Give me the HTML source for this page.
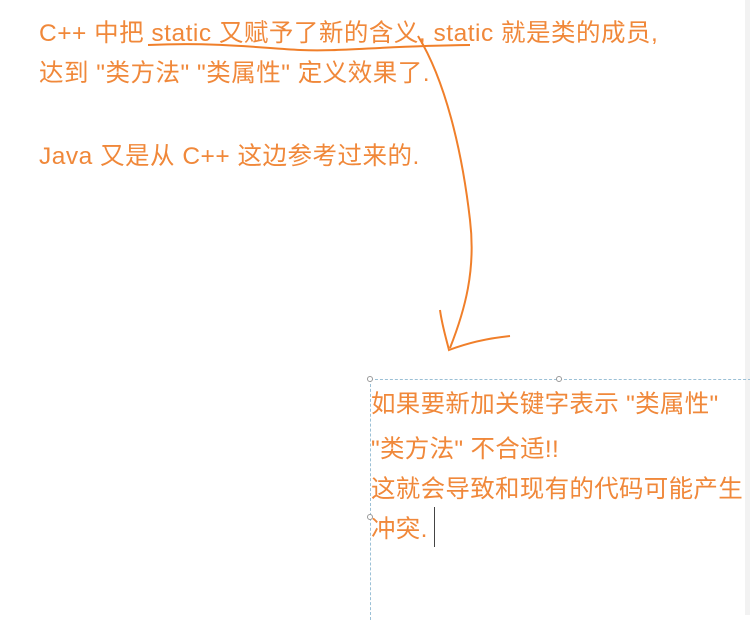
<!DOCTYPE html>
<html><head><meta charset="utf-8"><style>
body{margin:0;width:750px;height:615px;background:#fff;position:relative;overflow:hidden;font-family:"Liberation Sans","Noto Sans CJK SC",sans-serif;color:#f0883a}
.t{position:absolute;font-size:24.5px;white-space:nowrap;line-height:28px}
.box{position:absolute;left:370px;top:379px;width:390px;height:240px;border-top:1px dashed #9bc0d6;border-left:1px dashed #9bc0d6}
.h{position:absolute;width:4px;height:4px;border:1px solid #999;border-radius:50%;background:#fff}
</style></head><body>
<div style="position:absolute;right:0;top:0;width:5px;height:615px;background:#f2f2f2"></div>
<div class="t" style="left:39px;top:20px;letter-spacing:0.5px">C++ 中把 static 又赋予了新的含义, static 就是类的成员,</div>
<div class="t" style="left:39px;top:60px;letter-spacing:0.5px">达到 "类方法" "类属性" 定义效果了.</div>
<div class="t" style="left:39px;top:143px;letter-spacing:0.5px">Java 又是从 C++ 这边参考过来的.</div>
<svg width="750" height="615" style="position:absolute;left:0;top:0">
<path d="M148 45 C220 42 260 48 300 50 C340 52 380 46 470 45" fill="none" stroke="#f07f2a" stroke-width="2"/>
<path d="M418 36 C445 80 462 150 470 220 C476 270 465 310 450 348" fill="none" stroke="#f07f2a" stroke-width="2"/>
<path d="M440 310 C442 325 446 338 449 350 C470 342 490 338 510 336" fill="none" stroke="#f07f2a" stroke-width="2"/>
</svg>
<div class="box"></div>
<div class="h" style="left:367px;top:376px"></div>
<div class="h" style="left:556px;top:376px"></div>
<div class="h" style="left:367px;top:514px"></div>
<div class="t" style="left:371px;top:391px;letter-spacing:0.3px">如果要新加关键字表示 "类属性"</div>
<div class="t" style="left:371px;top:436px;letter-spacing:0.3px">"类方法" 不合适!!</div>
<div class="t" style="left:371px;top:476px;letter-spacing:0.3px">这就会导致和现有的代码可能产生</div>
<div class="t" style="left:371px;top:516px;letter-spacing:0.3px">冲突.</div>
<div style="position:absolute;left:434px;top:507px;width:1px;height:40px;background:#444"></div>
</body></html>
